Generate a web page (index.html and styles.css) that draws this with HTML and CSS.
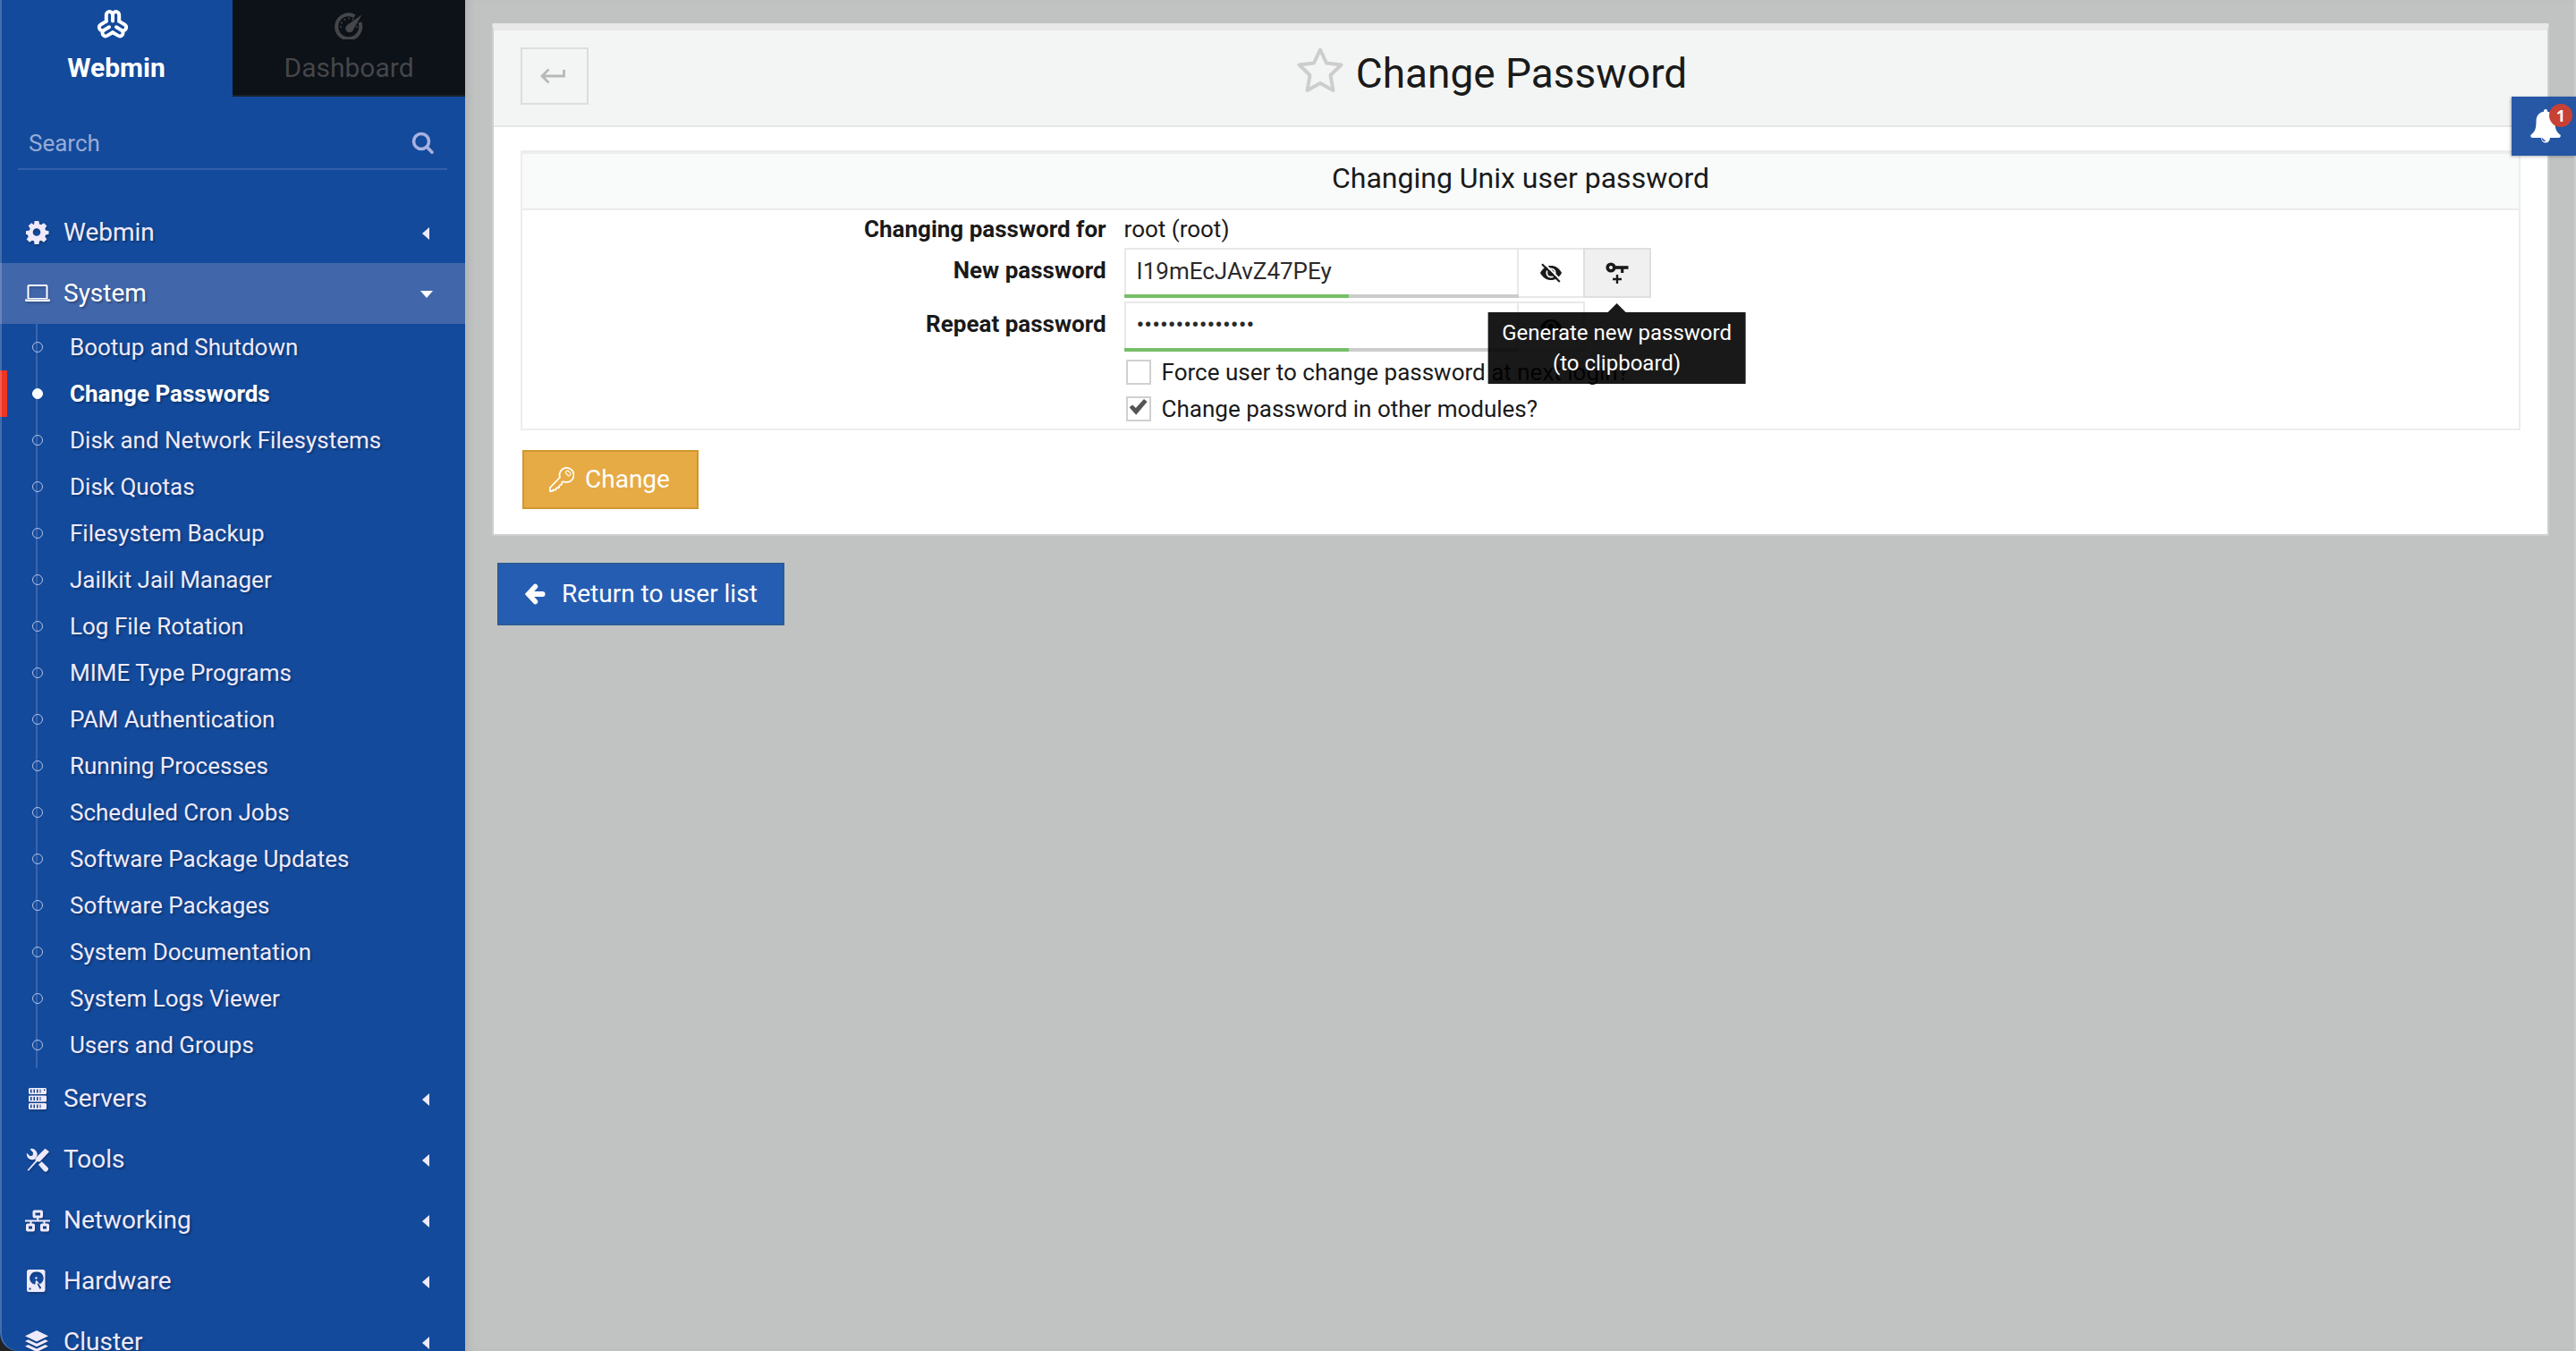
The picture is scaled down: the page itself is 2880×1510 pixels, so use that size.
FILE: index.html
```html
<!DOCTYPE html>
<html lang="en">
<head>
<meta charset="utf-8">
<title>Change Password</title>
<link rel="stylesheet" href="styles.css">
</head>
<body>
<aside class="sidebar">
  <div class="tabs">
    <button class="tab tab-active" type="button">
      <svg class="tab-icon" width="36" height="34" viewBox="-18 -18 36 34" fill="none" stroke="currentColor" stroke-width="4" stroke-linecap="round" stroke-linejoin="round">
        <g id="arm"><path d="M-7.2-4.2V-11.3a3.6 3.6 0 0 1 7.2 0a3.6 3.6 0 0 1 7.2 0V-4.2M0-11.3V-4.6"/></g>
        <use href="#arm" transform="rotate(120)"/>
        <use href="#arm" transform="rotate(240)"/>
      </svg>
      <span>Webmin</span>
    </button>
    <button class="tab" type="button">
      <svg class="tab-icon" width="36" height="34" viewBox="0 -1 36 34" fill="none" stroke="currentColor">
        <path d="M30.300 14A13.500 13.500 0 1 1 24.500 7.200" stroke-width="4"/>
        <path d="M32.500 5.500 22.500 23.200A4.500 4.500 0 1 1 16.200 17Z" fill="currentColor" stroke="none"/>
        <g fill="currentColor" stroke="none"><circle cx="9" cy="19" r="1"/><circle cx="10" cy="14.500" r="1"/><circle cx="13.500" cy="11" r="1"/><circle cx="18" cy="9.500" r="1"/><circle cx="22.500" cy="10.500" r="1"/><circle cx="27" cy="19" r="1"/></g>
      </svg>
      <span>Dashboard</span>
    </button>
  </div>
  <form class="search">
    <input class="search-input" type="search" placeholder="Search" aria-label="Search">
    <svg width="26" height="26" viewBox="0 0 26 26" fill="none" stroke="currentColor" stroke-width="3.600" stroke-linecap="round"><circle cx="11" cy="11" r="8.500"/><path d="M17.500 17.500 23 23.200"/></svg>
  </form>
  <nav class="menu">
    <a class="cat" href="#webmin">
      <svg class="cat-icon" viewBox="0 0 28 28" fill="currentColor"><path fill-rule="evenodd" d="M11.600 2h4.800l.6 3.500 2 .8 3-2 3.300 3.300-2 3 .8 2 3.400.6v3.600l-3.400.6-.8 2 2 3-3.300 3.300-3-2-2 .8-.6 3.500h-4.800l-.6-3.500-2-.8-3 2-3.300-3.300 2-3-.8-2L2 16.800v-3.600l3.900-.6.8-2-2-3L8 4.300l3 2zM14 10.200a4.300 4.300 0 1 0 0 8.600a4.300 4.300 0 1 0 0-8.600z" transform="translate(-1 -1)"/></svg>
      <span>Webmin</span><i class="caret"></i></a>
    <a class="cat cat-open" href="#system">
      <svg class="cat-icon" viewBox="0 0 28 28" fill="currentColor"><path fill-rule="evenodd" d="M4.500 4h19a2 2 0 0 1 2 2v14h-23V6a2 2 0 0 1 2-2zM4.500 6v13h19V6z"/><path d="M0 20.500h28v1a1.500 1.500 0 0 1-1.500 1.500H1.500A1.500 1.500 0 0 1 0 21.500z"/></svg>
      <span>System</span><i class="caret caret-down"></i></a>
    <ul class="sub">
      <li><a href="#bootup">Bootup and Shutdown</a></li>
      <li class="current"><a href="#passwords">Change Passwords</a></li>
      <li><a href="#mounts">Disk and Network Filesystems</a></li>
      <li><a href="#quotas">Disk Quotas</a></li>
      <li><a href="#backup">Filesystem Backup</a></li>
      <li><a href="#jailkit">Jailkit Jail Manager</a></li>
      <li><a href="#logrotate">Log File Rotation</a></li>
      <li><a href="#mime">MIME Type Programs</a></li>
      <li><a href="#pam">PAM Authentication</a></li>
      <li><a href="#processes">Running Processes</a></li>
      <li><a href="#cron">Scheduled Cron Jobs</a></li>
      <li><a href="#updates">Software Package Updates</a></li>
      <li><a href="#packages">Software Packages</a></li>
      <li><a href="#docs">System Documentation</a></li>
      <li><a href="#logs">System Logs Viewer</a></li>
      <li><a href="#users">Users and Groups</a></li>
    </ul>
    <a class="cat" href="#servers">
      <svg class="cat-icon" viewBox="0 0 28 28" fill="currentColor"><path fill-rule="evenodd" d="M5 2h18l1 1v5l-1 1H5L4 8V3zM6 3.500v4h1.500v-4zM9.500 3.500v4H11v-4zM13 3.500v4h1.500v-4zM16.500 3.500v4H17.500v-4zM21 3.500v1.500h1.500V3.500z"/><path fill-rule="evenodd" d="M5 10.500h18l1 1v5l-1 1H5l-1-1v-5zM6 12v4h1.500v-4zM9.500 12v4H11v-4zM13 12v4h1.500v-4zM16.500 12v4H17.500v-4z"/><path fill-rule="evenodd" d="M5 19h18l1 1v5l-1 1H5l-1-1v-5zM6 20.500v4h1.500v-4zM9.500 20.500v4H11v-4zM13 20.500v4h1.500v-4zM16.500 20.500v4H17.500v-4z"/></svg>
      <span>Servers</span><i class="caret"></i></a>
    <a class="cat" href="#tools">
      <svg class="cat-icon" viewBox="0 0 28 28" fill="currentColor"><path d="M22.500 1.800 27 5.200 16.500 16.600l-3-.3L3.800 26.800 2.600 25.800 11.800 15.300l-.5-2.500z"/><path d="M5.500 2.200a6.200 6.200 0 0 1 7.600 8.300l-2.600 3.300A6.200 6.200 0 0 1 2 6.800l3.700 3.500 2.800-.8.6-3z"/><path d="m18.600 16.200 6.400 6.300a2.800 2.800 0 0 1-4 4.200l-6-7z"/></svg>
      <span>Tools</span><i class="caret"></i></a>
    <a class="cat" href="#networking">
      <svg class="cat-icon" viewBox="0 0 28 28" fill="none" stroke="currentColor" stroke-width="3"><rect x="10" y="4" width="8.500" height="6" rx=".5"/><path d="M0 14.500h28" stroke-width="2"/><path d="M14.200 11v3M6.500 15v3M21.500 15v3" stroke-width="2"/><rect x="2.500" y="19" width="7" height="6" rx=".5"/><rect x="18.500" y="19" width="7" height="6" rx=".5"/></svg>
      <span>Networking</span><i class="caret"></i></a>
    <a class="cat" href="#hardware">
      <svg class="cat-icon" viewBox="0 0 28 28" fill="currentColor"><path fill-rule="evenodd" d="M4.500 1h15.500a2.500 2.500 0 0 1 2.500 2.500v20a2.500 2.500 0 0 1-2.500 2.500H4.500A2.500 2.500 0 0 1 2 23.500v-20A2.500 2.500 0 0 1 4.500 1zM12.500 3.500a7.200 7.200 0 0 0-4 13.200l2.800 1 .6-4 .9-.7 1 1 2.600 3.200a7.200 7.200 0 0 0-3.900-13.700zM13.500 16.800l3 6 1.800-1.200-3.300-5.200zM4.500 21.500v2h2v-2z"/><circle cx="12.500" cy="10.500" r="1.200"/></svg>
      <span>Hardware</span><i class="caret"></i></a>
    <a class="cat" href="#cluster">
      <svg class="cat-icon" viewBox="0 0 28 28" fill="currentColor"><path d="M13 1 26 7.200 13 13.400 0 7.200z"/><path d="m3.500 11.200 9.500 4.600 9.500-4.600L26 13l-13 6.200L0 13z"/><path d="m3.500 17 9.500 4.600L22.500 17l3.500 1.800L13 25 0 18.800z"/></svg>
      <span>Cluster</span><i class="caret"></i></a>
  </nav>
</aside>

<main class="content">
  <section class="panel">
    <header class="panel-head">
      <div class="head-left">
        <button class="back" type="button" aria-label="Back">
          <svg width="28" height="18" viewBox="0 0 28 18" fill="none" stroke="currentColor" stroke-width="2.800"><path d="M9.500 1.500 2 9l7.500 7.500M2.500 9h24V2"/></svg>
        </button>
        <button class="star" type="button" aria-label="Add to favourites">
          <svg width="52" height="51" viewBox="0 0 52 51" fill="none" stroke="currentColor" stroke-width="4" stroke-linejoin="round"><path d="M26 2.500 33 17.500 49.500 19.500 37.500 31 40.500 48 26 40 11.500 48 14.500 31 2.500 19.500 19 17.500z"/></svg>
        </button>
      </div>
      <h1>Change Password</h1>
    </header>
    <form class="panel-body">
      <div class="box">
        <h2>Changing Unix user password</h2>
        <div class="row">
          <span class="label">Changing password for</span>
          <span class="value">root (root)</span>
        </div>
        <div class="row row-input">
          <label class="label" for="new">New password</label>
          <div class="value group">
            <span class="field"><input id="new" type="text" value="I19mEcJAvZ47PEy"><span class="meter"></span></span>
            <button class="addon" type="button" aria-label="Hide password">
              <svg width="26" height="22" viewBox="0 0 26 22"><path fill="currentColor" d="M1 11C4 5.500 8 3 13 3s9 2.500 12 8c-3 5.500-7 8-12 8S4 16.500 1 11z"/><circle cx="13" cy="11" r="4.700" fill="none" stroke="#fff" stroke-width="1.800"/><path d="M5.300.3 24.600 19.600" stroke="#fff" stroke-width="2"/><path d="M3 1.200 22.800 21" stroke="currentColor" stroke-width="2.200"/></svg>
            </button>
            <button class="addon addon-hover" type="button" aria-describedby="tip">
              <svg width="26" height="26" viewBox="0 0 26 26" fill="none" stroke="currentColor"><circle cx="6" cy="7" r="3.800" stroke-width="3.600"/><path d="M10 7h15.500" stroke-width="3.600"/><path d="M18.700 7v6" stroke-width="3.200"/><path d="M13 15v10M8 20h10" stroke-width="2.400"/></svg>
              <span class="tip" id="tip" role="tooltip">Generate new password<br>(to clipboard)</span>
            </button>
          </div>
        </div>
        <div class="row row-input">
          <label class="label" for="repeat">Repeat password</label>
          <div class="value group">
            <span class="field"><input id="repeat" type="password" value="I19mEcJAvZ47PEy"><span class="meter"></span></span>
            <button class="addon" type="button" aria-label="Show password">
              <svg width="26" height="22" viewBox="0 0 26 22"><path fill="currentColor" d="M1 11C4 5.500 8 3 13 3s9 2.500 12 8c-3 5.500-7 8-12 8S4 16.500 1 11z"/><circle cx="13" cy="11" r="4.700" fill="none" stroke="#fff" stroke-width="1.800"/></svg>
            </button>
          </div>
        </div>
        <div class="row row-check">
          <label class="value check"><input type="checkbox"><span>Force user to change password at next login?</span></label>
        </div>
        <div class="row row-check">
          <label class="value check"><input type="checkbox" checked><span>Change password in other modules?</span></label>
        </div>
      </div>
      <button class="btn btn-change" type="button">
        <svg width="28" height="28" viewBox="0 0 28 28" fill="none" stroke="currentColor" stroke-width="1.800" stroke-linejoin="round"><path d="M12 11.500a8 8 0 1 1 5 5l-2.500.2-.8 3-2.200 1-.6 2.300-2.700.4-1 2.300-2.700-.2L3.600 27H1v-4z"/><rect x="18.200" y="5" width="6" height="3.800" rx="1.600" transform="rotate(48 21.200 6.900)" stroke-width="1.200"/></svg>
        <span>Change</span>
      </button>
    </form>
  </section>
  <a class="btn btn-return" href="#list">
    <svg width="24" height="24" viewBox="0 0 24 24" fill="none" stroke="currentColor" stroke-width="5.500" stroke-linecap="round"><path d="M11.500 3.500 3.500 12l8 8.500"/><path d="M5 12h14.500" stroke-width="6"/></svg>
    <span>Return to user list</span>
  </a>
</main>

<button class="bell" type="button" aria-label="Notifications">
  <svg width="36" height="38" viewBox="0 0 36 38" fill="currentColor"><path d="M18 0a2 2 0 0 1 2 2v.8c6 1 8.500 5.500 8.500 10.500 0 9 1.500 12 6 15.500.8.900 0 3.200-1.500 3.200H3c-1.500 0-2.300-2.300-1.500-3.200 4.500-3.500 6-6.500 6-15.500C7.500 8.300 10 3.800 16 2.800V2a2 2 0 0 1 2-2z"/><path d="M13 32h10a5 5.500 0 0 1-10 0z"/><path d="M14.200 32.500a4 4 0 0 0 3.600 3" fill="none" stroke="#2356a5" stroke-width="1.200"/></svg>
  <span class="badge">1</span>
</button>
</body>
</html>
```
FILE: styles.css
```css
* { box-sizing: border-box; }

body {
  margin: 0;
  height: 100vh;
  display: flex;
  overflow: hidden;
  background: #222;
  color: #1a1a1a;
  font-family: Roboto, "Liberation Sans", sans-serif;
  font-size: 26px;
  line-height: 40px;
}

button, input { font: inherit; color: inherit; margin: 0; }
button { border: 0; padding: 0; background: none; }
a { color: inherit; text-decoration: none; }
svg { display: block; flex: none; }
h1, h2 { margin: 0; font-weight: 400; }

/* Sidebar */
.sidebar {
  position: relative;
  z-index: 1;
  flex: none;
  width: 520px;
  height: 100vh;
  overflow: hidden;
  background: #134a9b;
  color: #efeafb;
  border-bottom-left-radius: 20px;
}
.sidebar::after {
  content: "";
  position: absolute;
  inset: 0;
  border-radius: inherit;
  box-shadow: inset 2px 0 rgba(255, 255, 255, .2);
  pointer-events: none;
}

.tabs { display: flex; height: 108px; }
.tab {
  flex: 1;
  display: flex;
  flex-direction: column;
  align-items: center;
  gap: 10px;
  padding-top: 10px;
  background: #0d1118;
  border-bottom: 2px solid #1c2027;
  color: #444649;
  font-size: 30px;
  line-height: 44px;
}
.tab-active {
  background: none;
  border-bottom-color: transparent;
  color: #fff;
  font-weight: 700;
}
.tab-icon { margin-right: 8px; }
.tab:last-child .tab-icon { margin-right: 0; }

.search {
  display: flex;
  align-items: center;
  height: 82px;
  margin: 0 20px 36px;
  padding: 24px 14px 0 12px;
  border-bottom: 2px solid #335fad;
  color: #a8b1e0;
}
.search-input {
  flex: 1;
  min-width: 0;
  padding: 0;
  border: 0;
  background: none;
  outline: 0;
  appearance: none;
}
.search-input::placeholder { color: #98abd6; opacity: 1; }

.menu { text-shadow: 2px 2px 2px rgba(0, 0, 0, .25); }
.cat {
  display: flex;
  align-items: center;
  height: 68px;
  padding: 0 40px 0 28px;
  font-size: 28px;
}
.cat span { flex: 1; }
.cat-icon {
  width: 28px;
  height: 28px;
  margin-right: 15px;
  filter: drop-shadow(1px 2px 1px rgba(0, 0, 0, .2));
}
.cat-open { background: #4166aa; color: #fff; }
.caret {
  margin-top: 2px;
  border: solid transparent;
  border-width: 7px 8px 7px 0;
  border-right-color: currentColor;
}
.caret-down {
  border-width: 8px 7px 0;
  border-color: currentColor transparent transparent;
  margin-right: -4px;
}

.sub {
  margin: 0;
  padding: 0;
  list-style: none;
  background: linear-gradient(#3b64ae, #3b64ae) 40px 0 / 2px 100% no-repeat;
}
.sub li { border-left: 8px solid transparent; }
.sub a {
  display: flex;
  align-items: center;
  gap: 30px;
  height: 52px;
  padding-left: 28px;
}
.sub a::before {
  content: "";
  width: 10px;
  height: 10px;
  border: 1px solid #b4c2e6;
  border-radius: 50%;
}
.sub .current { border-left-color: #ee3524; color: #fff; font-weight: 700; }
.current a::before { background: #fff; border-color: #fff; }

/* Content */
.content {
  flex: 1;
  min-width: 0;
  padding: 26px 28px 0 30px;
  background: #c1c3c2;
  border-right: 2px solid #cbcccb;
  box-shadow: inset 8px 0 8px -4px rgba(0, 0, 0, .08);
}
.panel {
  background: #fff;
  border: 2px solid #cfcfcf;
  border-top: 8px solid #e8e8e8;
  border-radius: 2px;
}
.panel-head {
  display: grid;
  grid-template-columns: 1fr auto 1fr;
  padding: 19px 28px 23px 30px;
  background: #f3f5f4;
  border-bottom: 2px solid #e6e6e6;
}
.head-left { display: flex; justify-content: space-between; }
.back {
  display: flex;
  align-items: center;
  justify-content: center;
  width: 76px;
  height: 64px;
  padding-right: 4px;
  border: 2px solid #dcdddc;
  color: #b8b8b8;
}
.star { align-self: flex-start; margin-right: 14px; color: #cdcdcd; }
.panel-head h1 { font-size: 46px; line-height: 58px; }

.panel-body { padding: 26px 30px 28px; }
.box {
  border: 2px solid #ededed;
  border-top-width: 4px;
  padding-bottom: 2px;
}
.box h2 {
  padding: 5px 0 12px;
  background: #f9fbfa;
  border-bottom: 2px solid #ebedec;
  font-size: 32px;
  line-height: 44px;
  text-align: center;
}
.row { display: grid; grid-template-columns: 30% 1fr; min-height: 40px; line-height: 42px; }
.label { padding-right: 17px; text-align: right; font-weight: 700; }
.value { grid-column: 2; padding-left: 3px; }
.row:not(.row-input):not(.row-check) { height: 40px; }
.row-input { height: 60px; padding: 2px 0; }
.row-input .label { padding-top: 4px; }
.row-check { height: 41px; }

.group { display: flex; }
.field { position: relative; width: 441px; }
.field input {
  width: 100%;
  height: 56px;
  padding: 0 12px 4px;
  border: 2px solid #e8e8e8;
  outline: 0;
  background: #fff;
  color: #2a2a2a;
}
.meter {
  position: absolute;
  z-index: 1;
  inset: auto 0 0;
  height: 4px;
  background: linear-gradient(90deg, #76bf68 57%, #ccc 57%);
}
.addon {
  position: relative;
  display: flex;
  align-items: center;
  justify-content: center;
  width: 76px;
  height: 56px;
  margin-left: -2px;
  border: 2px solid #e8e8e8;
}
.addon-hover { background: #f0f0f0; border-color: #dfdfdf; }

.tip {
  position: absolute;
  z-index: 2;
  top: 70px;
  left: 50%;
  transform: translateX(-50%);
  padding: 6px 16px;
  background: rgba(0, 0, 0, .9);
  color: #fff;
  font-size: 24px;
  line-height: 34px;
  white-space: nowrap;
}
.tip::before {
  content: "";
  position: absolute;
  left: 50%;
  bottom: 100%;
  margin-left: -10px;
  border: 10px solid transparent;
  border-top: 0;
  border-bottom-color: rgba(0, 0, 0, .9);
}

.check { display: flex; align-items: center; gap: 12px; justify-self: start; padding-left: 5px; }
.check input {
  appearance: none;
  display: grid;
  place-items: center;
  width: 28px;
  height: 28px;
  border: 2px solid #d0d0d0;
  background: #fff;
}
.check input:checked::before {
  content: "";
  width: 20px;
  height: 18px;
  margin-bottom: 4px;
  background: #555;
  clip-path: polygon(0 52%, 18% 36%, 36% 56%, 82% 0, 100% 16%, 38% 98%);
}

.btn { display: inline-flex; align-items: center; border: 2px solid; color: #fff; font-size: 28px; }
.btn span { color: #fff; }
.btn svg { color: #fff; }
.btn-change {
  gap: 12px;
  height: 66px;
  margin: 22px 2px 0;
  padding: 0 30px 0 28px;
  background: #e6ab44;
  border-color: #d0962f;
}
.btn-return {
  gap: 17px;
  height: 70px;
  margin: 30px 6px 0;
  padding: 0 28px 0 29px;
  background: #255db2;
  border-color: #2a5b97;
}

/* Notifications */
.bell {
  position: fixed;
  z-index: 3;
  top: 108px;
  right: 0;
  display: flex;
  align-items: center;
  width: 72px;
  height: 66px;
  padding-left: 20px;
  background: rgba(29, 81, 162, .96);
  color: #fff;
  box-shadow: -1px 1px 3px rgba(0, 0, 0, .3);
}
.badge {
  position: absolute;
  top: 8px;
  right: 4px;
  width: 26px;
  height: 26px;
  border-radius: 50%;
  background: #c84135;
  font: 700 18px/26px "Open Sans", sans-serif;
  text-align: center;
}
```
